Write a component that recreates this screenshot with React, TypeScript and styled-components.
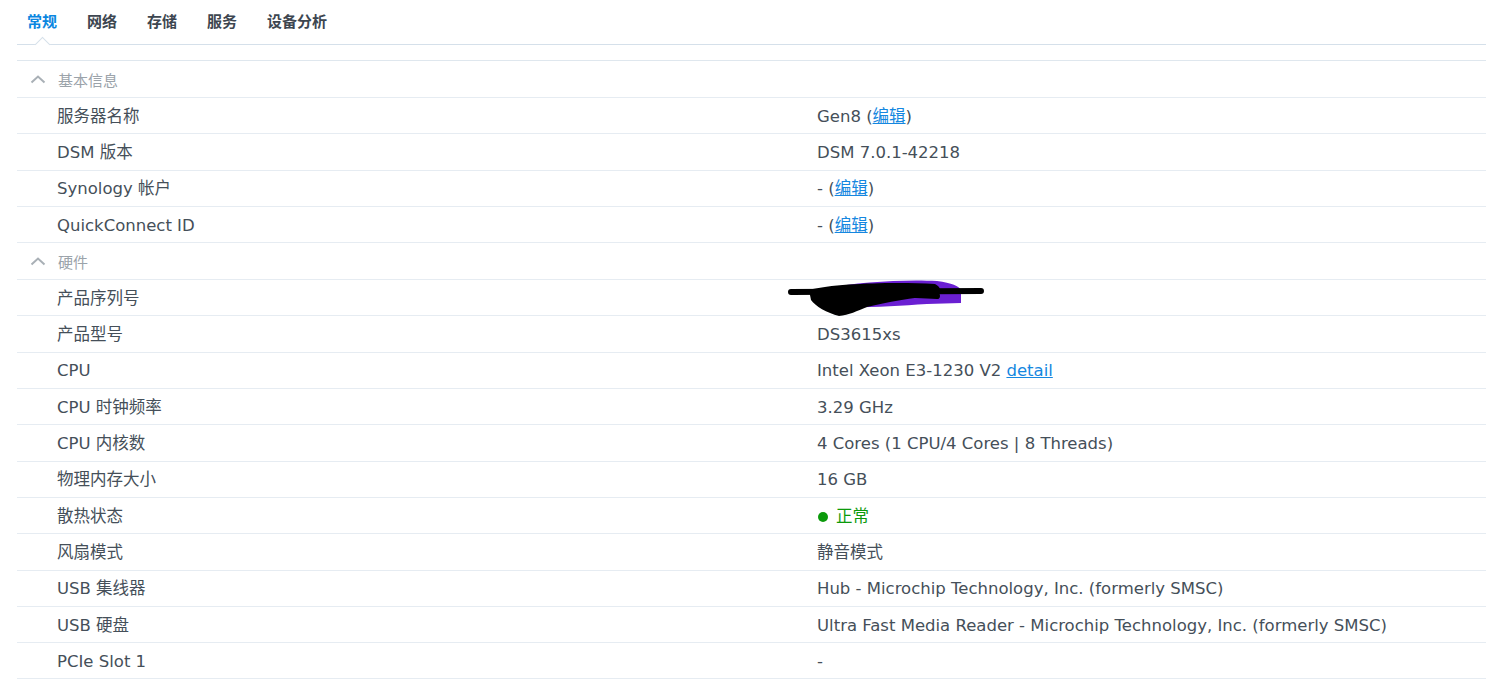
import React from "react";
import styled, { createGlobalStyle } from "styled-components";

const Global = createGlobalStyle`
  html, body { margin: 0; padding: 0; background: #ffffff; }
  body { font-family: "DejaVu Sans", Verdana, "Noto Sans CJK SC", sans-serif; }
`;

const Page = styled.div`
  padding-left: 17px;
  width: 1486px;
  box-sizing: border-box;
`;

const TabBar = styled.div`
  display: flex;
  gap: 30px;
  height: 44px;
  padding-left: 10px;
  border-bottom: 1px solid #d5e0ea;
  box-sizing: content-box;
`;

const Tab = styled.div<{ $active?: boolean }>`
  position: relative;
  display: flex;
  align-items: center;
  height: 44px;
  padding-bottom: 3px;
  box-sizing: border-box;
  font-family: "Noto Sans CJK SC", sans-serif;
  font-size: 15px;
  font-weight: 700;
  color: ${(p) => (p.$active ? "#0a86e0" : "#3d4650")};
  &::after {
    content: "";
    display: ${(p) => (p.$active ? "block" : "none")};
    position: absolute;
    left: 50%;
    bottom: -6px;
    width: 10px;
    height: 10px;
    margin-left: -5px;
    background: #ffffff;
    border-top: 1px solid #d5e0ea;
    border-left: 1px solid #d5e0ea;
    transform: rotate(45deg);
  }
`;

const Table = styled.div`
  margin-top: 15px;
  border-top: 1px solid #dfe7ee;
`;

const SectionHeader = styled.div`
  display: flex;
  align-items: center;
  height: 37px;
  box-sizing: border-box;
  border-bottom: 1px solid #e6ecf2;
  padding-left: 13px;
  gap: 12px;
  font-family: "Noto Sans CJK SC", sans-serif;
  font-size: 15px;
  color: #9ba3aa;
`;

const Row = styled.div`
  display: grid;
  grid-template-columns: 800px 1fr;
  align-items: center;
  height: 36.3px;
  box-sizing: border-box;
  border-bottom: 1px solid #e6ecf2;
  padding-top: 2px;
  font-size: 16.5px;
  line-height: 20px;
  color: #454f59;
  font-family: "DejaVu Sans", Verdana, "Noto Sans CJK SC", sans-serif;
`;

const Label = styled.div`
  padding-left: 40px;
  white-space: nowrap;
`;

const Value = styled.div`
  position: relative;
  white-space: nowrap;
  min-height: 20px;
`;

const Link = styled.a`
  color: #1587e0;
  text-decoration: underline;
  cursor: pointer;
`;

const Status = styled.span`
  display: inline-flex;
  align-items: center;
  gap: 8px;
  color: #0b9a0b;
`;

const Dot = styled.span`
  width: 10px;
  height: 10px;
  border-radius: 50%;
  background: #0b9a0b;
  margin-left: 1px;
`;

const Scribble = styled.svg`
  position: absolute;
  left: -30px;
  top: -9px;
  overflow: visible;
`;

const Chevron = () => (
  <svg width="16" height="10" viewBox="0 0 16 10">
    <path d="M1.5 8.5 L8 2.5 L14.5 8.5" fill="none" stroke="#a9b0b6" strokeWidth="2" />
  </svg>
);

const Edit = ({ prefix }: { prefix: string }) => (
  <span>
    {prefix} (<Link>编辑</Link>)
  </span>
);

type Item = { label: string; value: React.ReactNode };

const basic: Item[] = [
  { label: "服务器名称", value: <Edit prefix="Gen8" /> },
  { label: "DSM 版本", value: "DSM 7.0.1-42218" },
  { label: "Synology 帐户", value: <Edit prefix="-" /> },
  { label: "QuickConnect ID", value: <Edit prefix="-" /> },
];

const hardware: Item[] = [
  {
    label: "产品序列号",
    value: (
      <Scribble width="200" height="40" viewBox="0 0 200 40">
        <path d="M40 8 C70 2 120 -1 150 1 C165 3 172 6 174 10 L174 23 L140 24 C110 26 80 28 42 27 Z" fill="#6a1fd2" />
        <path d="M22 10 C50 3 110 2 148 4 C154 7 155 12 150 15 C125 18 100 22 80 27 C70 31 62 35 52 36 C40 33 28 26 24 20 Z" fill="#000" />
        <path d="M4 12 L194 11" stroke="#000" strokeWidth="6" strokeLinecap="round" />
        <path d="M30 18 C70 14 120 14 150 16" stroke="#000" strokeWidth="6" strokeLinecap="round" />
      </Scribble>
    ),
  },
  { label: "产品型号", value: "DS3615xs" },
  {
    label: "CPU",
    value: (
      <span>
        Intel Xeon E3-1230 V2 <Link>detail</Link>
      </span>
    ),
  },
  { label: "CPU 时钟频率", value: "3.29 GHz" },
  { label: "CPU 内核数", value: "4 Cores (1 CPU/4 Cores | 8 Threads)" },
  { label: "物理内存大小", value: "16 GB" },
  {
    label: "散热状态",
    value: (
      <Status>
        <Dot />
        正常
      </Status>
    ),
  },
  { label: "风扇模式", value: "静音模式" },
  { label: "USB 集线器", value: "Hub - Microchip Technology, Inc. (formerly SMSC)" },
  { label: "USB 硬盘", value: "Ultra Fast Media Reader - Microchip Technology, Inc. (formerly SMSC)" },
  { label: "PCIe Slot 1", value: "-" },
];

const tabs = ["常规", "网络", "存储", "服务", "设备分析"];

export default function App() {
  return (
    <Page>
      <Global />
      <TabBar>
        {tabs.map((t, i) => (
          <Tab key={t} $active={i === 0}>
            {t}
          </Tab>
        ))}
      </TabBar>
      <Table>
        <SectionHeader>
          <Chevron />
          基本信息
        </SectionHeader>
        {basic.map((r) => (
          <Row key={r.label}>
            <Label>{r.label}</Label>
            <Value>{r.value}</Value>
          </Row>
        ))}
        <SectionHeader>
          <Chevron />
          硬件
        </SectionHeader>
        {hardware.map((r) => (
          <Row key={r.label}>
            <Label>{r.label}</Label>
            <Value>{r.value}</Value>
          </Row>
        ))}
      </Table>
    </Page>
  );
}
